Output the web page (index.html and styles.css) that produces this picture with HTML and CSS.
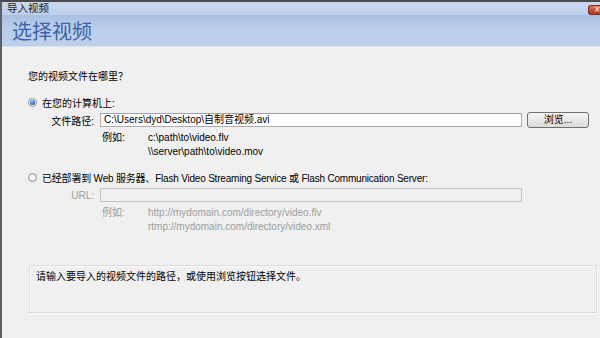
FILE: index.html
```html
<!DOCTYPE html>
<html>
<head>
<meta charset="utf-8">
<title>导入视频</title>
<link rel="stylesheet" href="styles.css">
</head>
<body>
<div class="window">
  <div class="titlebar">
    <span class="caption">导入视频</span>
    <span class="close">×</span>
  </div>
  <div class="banner">选择视频</div>

  <div class="content">
    <div class="question">您的视频文件在哪里？</div>

    <div class="option">
      <span class="radio checked"></span>
      <span>在您的计算机上:</span>
    </div>
    <div class="field">
      <span class="field-label">文件路径:</span>
      <span class="input">C:\Users\dyd\Desktop\自制音视频.avi</span>
      <span class="button">浏览...</span>
    </div>
    <div class="examples">
      <div class="example"><span class="ex-label">例如:</span><span>c:\path\to\video.flv</span></div>
      <div class="example"><span class="ex-label"></span><span>\\server\path\to\video.mov</span></div>
    </div>

    <div class="option second">
      <span class="radio"></span>
      <span class="tight">已经部署到 Web 服务器、Flash Video Streaming Service 或 Flash Communication Server:</span>
    </div>
    <div class="field disabled">
      <span class="field-label">URL:</span>
      <span class="input"></span>
    </div>
    <div class="examples disabled">
      <div class="example"><span class="ex-label">例如:</span><span>http://mydomain.com/directory/video.flv</span></div>
      <div class="example"><span class="ex-label"></span><span>rtmp://mydomain.com/directory/video.xml</span></div>
    </div>
  </div>

  <div class="hint">请输入要导入的视频文件的路径，或使用浏览按钮选择文件。</div>
</div>
</body>
</html>
```

FILE: styles.css
```css
body {
  margin: 0;
  font-family: "Liberation Sans", "Noto Sans CJK SC", sans-serif;
  font-size: 10px;
  color: #000;
  background-color: #f0f0f0;
}

.window {
  height: 338px;
  box-sizing: border-box;
  border-top: 2px solid #4a4a4a;
  border-left: 2px solid #5a5e66;
  background-color: #f0f0f0;
  overflow: hidden;
}

.titlebar {
  height: 13px;
  display: flex;
  justify-content: space-between;
  align-items: center;
  padding-left: 5px;
  background: linear-gradient(#cbd9ef, #bccfeb);
}

.caption {
  font-size: 10.5px;
  line-height: 13px;
  color: #1a1a1a;
}

.close {
  width: 12px;
  height: 10px;
  margin-top: 3px;
  box-sizing: border-box;
  border: 1px solid #7d2c22;
  border-right: none;
  border-radius: 3px 0 0 3px;
  background: linear-gradient(#e07a6c, #c8452f 55%, #b93a26);
  color: #fff;
  font-size: 10px;
  line-height: 8px;
  text-align: right;
  overflow: hidden;
}

.banner {
  height: 32px;
  padding-left: 10px;
  box-sizing: border-box;
  border-bottom: 1px solid #d9e2f0;
  background: linear-gradient(#a9c0e1, #bacdeb 40%, #bfd0ec);
  font-size: 20px;
  line-height: 34px;
  color: #3b63a8;
}

.content {
  padding-left: 26px;
}

.question {
  margin-top: 23px;
  line-height: 14px;
}

.option {
  display: flex;
  align-items: center;
  gap: 5px;
  margin-top: 11px;
  height: 14px;
}

.tight {
  letter-spacing: -0.2px;
}

.radio {
  width: 9px;
  height: 9px;
  box-sizing: border-box;
  border: 1px solid #8e8f8f;
  border-radius: 50%;
  background: radial-gradient(circle, #ffffff 20%, #dcdcdc 100%);
  display: flex;
  align-items: center;
  justify-content: center;
}

.radio.checked {
  background: #eef3fa;
}

.radio.checked::after {
  content: "";
  width: 5px;
  height: 5px;
  border-radius: 50%;
  background: radial-gradient(circle at 40% 35%, #8fc2f5, #1f5fb8 70%);
}

.field {
  display: flex;
  align-items: center;
  height: 16px;
  margin-top: 3px;
}

.field-label {
  width: 72px;
  padding-right: 6px;
  box-sizing: border-box;
  text-align: right;
}

.input {
  width: 422px;
  height: 14px;
  box-sizing: border-box;
  border: 1px solid #abadb3;
  border-top-color: #a0a3aa;
  background-color: #fff;
  padding-left: 3px;
  line-height: 12px;
  white-space: nowrap;
}

.button {
  width: 62px;
  height: 16px;
  margin-left: 5px;
  box-sizing: border-box;
  border: 1px solid #707070;
  border-radius: 3px;
  background: linear-gradient(#f6f6f6, #e9e9e9 50%, #dbdbdb);
  text-align: center;
  line-height: 14px;
}

.examples {
  margin-top: 3px;
  padding-left: 72px;
}

.example {
  display: flex;
  height: 14px;
  line-height: 14px;
}

.ex-label {
  width: 48px;
  padding-left: 2px;
  box-sizing: border-box;
}

.second {
  margin-top: 11px;
}

.disabled {
  color: #9d9d9d;
}

.disabled .input {
  background-color: #f0f0f0;
  border-color: #c3c3c3;
}

.hint {
  margin: 31px 3px 0 27px;
  height: 48px;
  box-sizing: border-box;
  border: 1px solid #dcdcdc;
  box-shadow: inset 1px 1px 0 #fafafa, 1px 1px 0 #fafafa;
  padding: 4px 6px;
  line-height: 14px;
}
```
